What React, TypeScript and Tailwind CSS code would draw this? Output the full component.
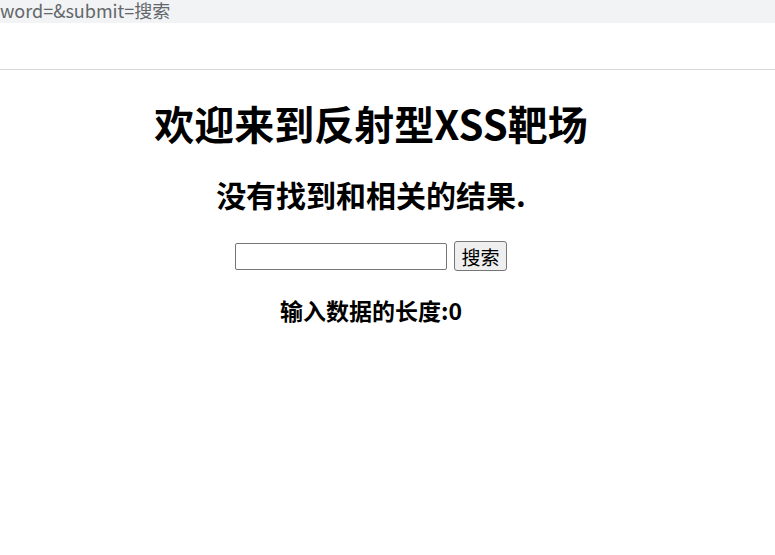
import React from 'react';

const cjk = { fontFamily: '"Noto Sans CJK SC", "Liberation Sans", sans-serif' };

export default function App() {
  return (
    <div className="w-[775px] h-[555px] bg-white overflow-hidden" style={cjk}>
      {/* address bar remnant */}
      <div className="h-[23px] bg-[#f1f3f4] overflow-hidden whitespace-nowrap">
        <span className="block text-[18px] leading-[20px] text-[#63676b]">word=&amp;submit=搜索</span>
      </div>
      <div className="h-[46px]" />
      <div className="h-px bg-[#d9d9d9]" />

      <div className="w-[742px] text-center text-black">
        <div className="h-[27px]" />
        <h1 className="h-[52px] flex items-center justify-center text-[40px] font-bold">欢迎来到反射型XSS靶场</h1>
        <div className="h-[25px]" />
        <h2 className="h-[40px] flex items-center justify-center text-[30px] font-bold">没有找到和相关的结果.</h2>
        <div className="h-[26px]" />
        <form className="h-[32px] flex items-center justify-center gap-[7px]" onSubmit={(e) => e.preventDefault()}>
          <input
            type="text"
            className="w-[212px] h-[27px] border border-[#767676] rounded-[2px] bg-white"
          />
          <button
            type="submit"
            className="w-[53px] h-[30px] border border-[#767676] rounded-[3px] bg-[#efefef] text-[19px] leading-none text-black"
          >
            搜索
          </button>
        </form>
        <div className="h-[21px]" />
        <h3 className="h-[34px] flex items-center justify-center text-[23px] font-bold">输入数据的长度:0</h3>
      </div>
    </div>
  );
}
